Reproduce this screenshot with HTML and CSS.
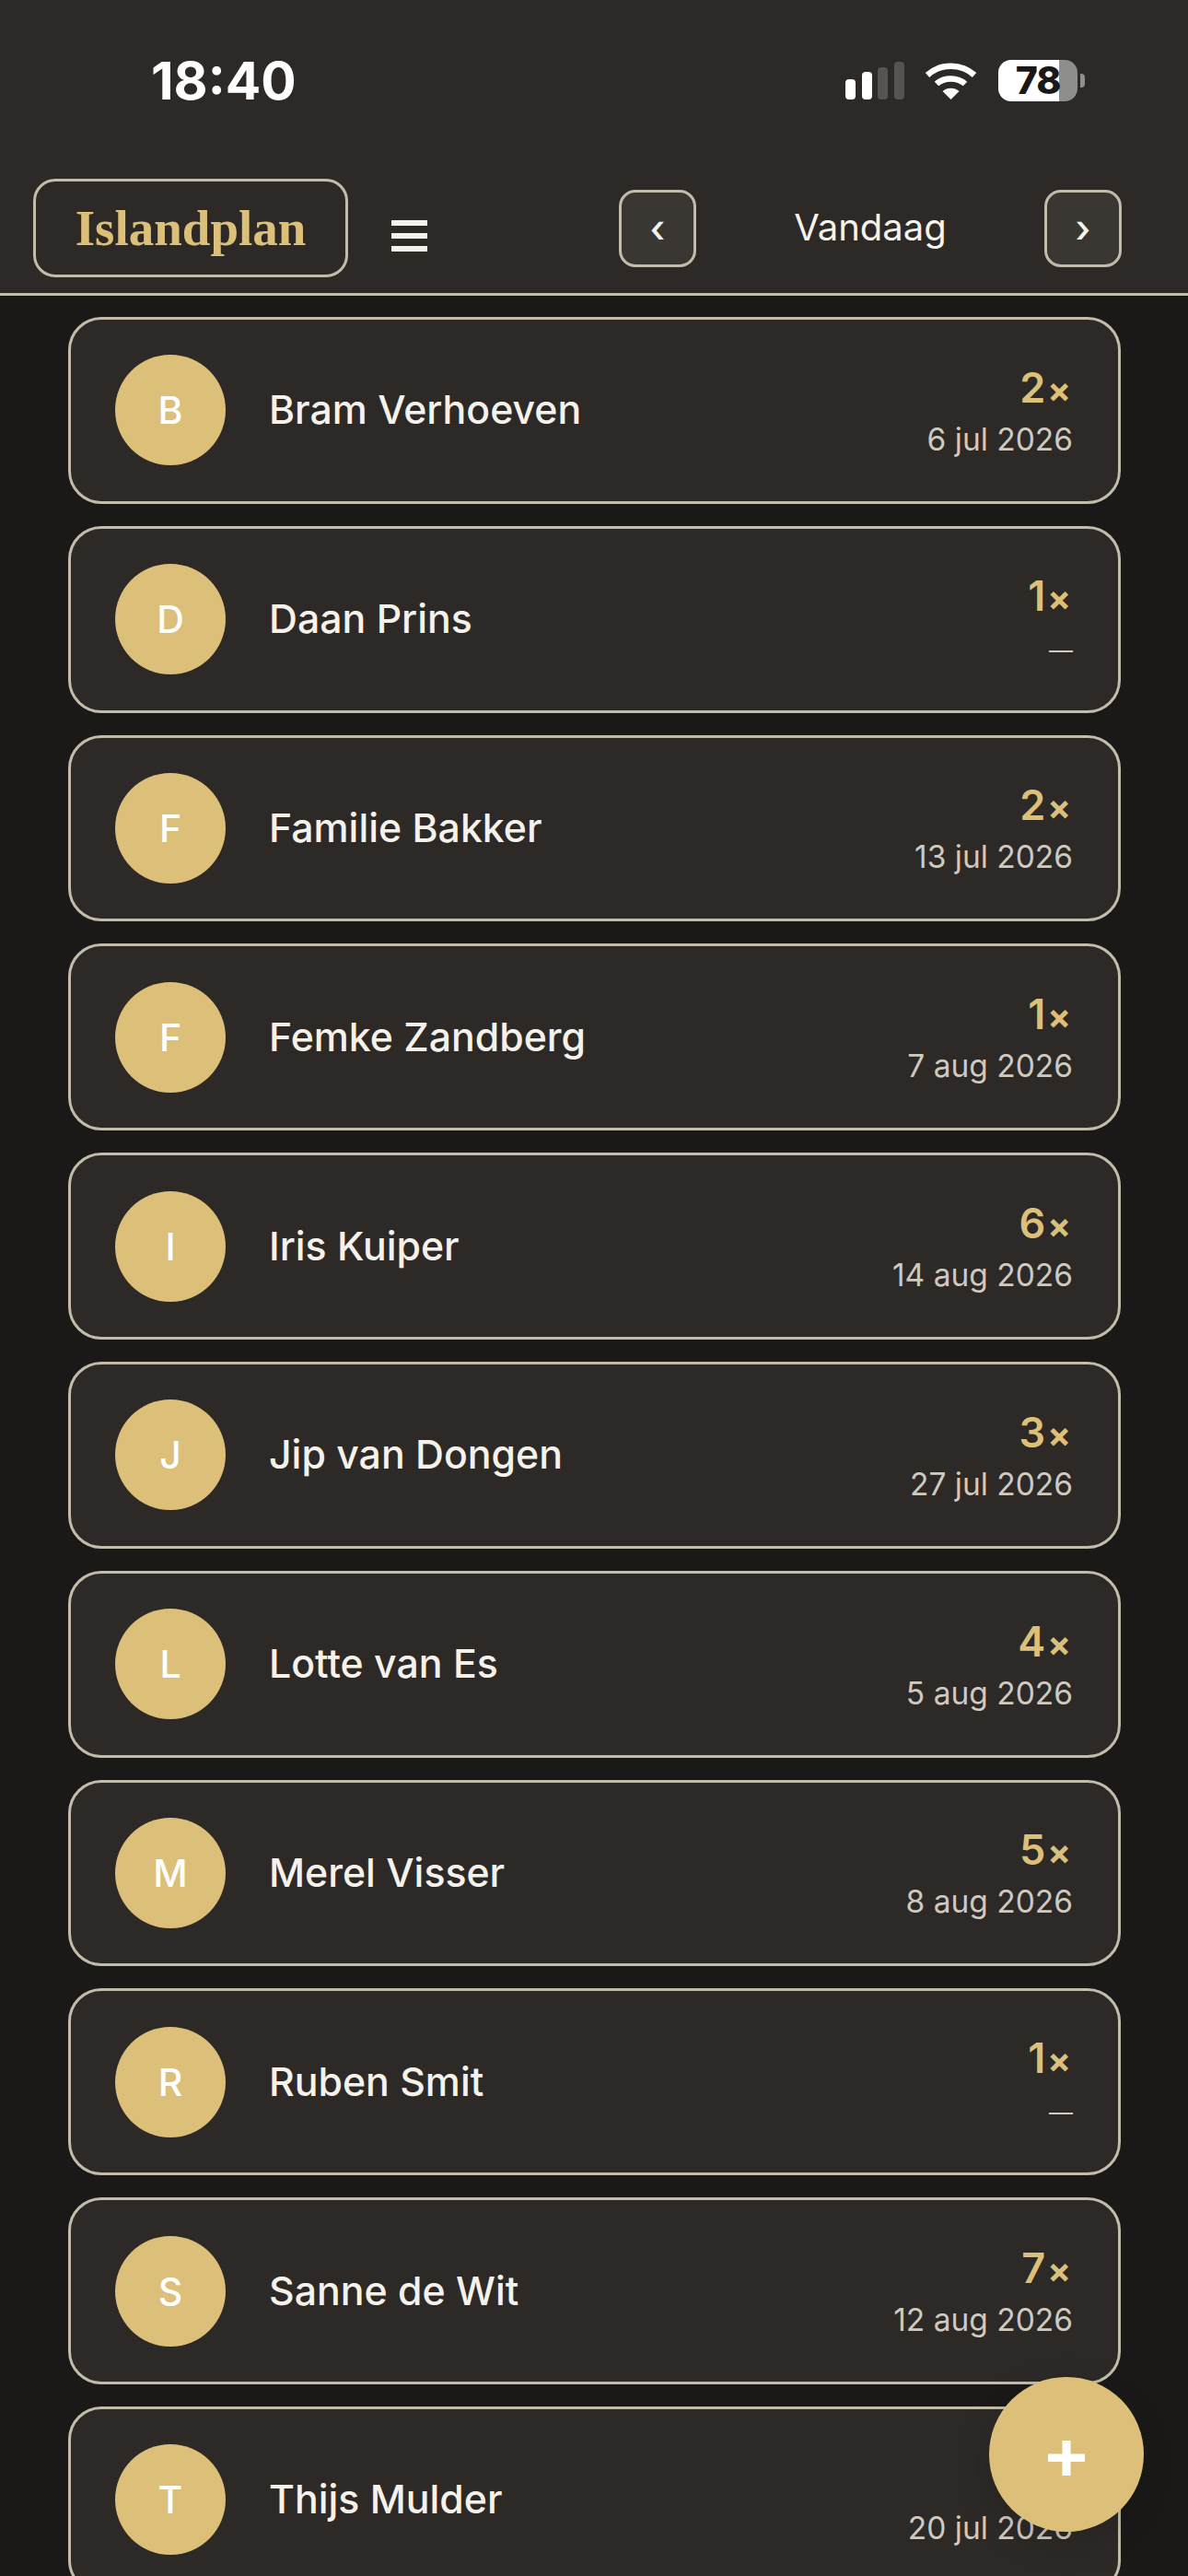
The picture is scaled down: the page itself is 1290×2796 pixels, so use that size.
FILE: index.html
```html
<!DOCTYPE html>
<html lang="nl">
<head>
    <meta charset="UTF-8">
    <meta name="viewport" content="width=device-width, initial-scale=1.0">
    <title>Islandplan</title>
    <link rel="stylesheet" href="styles.css">
</head>
<body>

    <div id="app">
        <header class="top">
            <div class="status">
                <span class="time">18:40</span>
                <div class="status-icons">
                    <svg class="signal" width="64" height="41" viewBox="0 0 64 41">
                        <rect x="0" y="19" width="11" height="22" rx="4" fill="#fff"/>
                        <rect x="18" y="11" width="11" height="30" rx="4" fill="#fff"/>
                        <rect x="35" y="6" width="11" height="35" rx="4" fill="#555452"/>
                        <rect x="53" y="0" width="11" height="41" rx="4" fill="#555452"/>
                    </svg>
                    <svg class="wifi" width="57" height="42" viewBox="0 0 57 42">
                        <path d="M3 15.500 C17 2.500 40 2.500 54 15.500" fill="none" stroke="#fff" stroke-width="6.500"/>
                        <path d="M13 25 C21 17.500 36 17.500 44 25" fill="none" stroke="#fff" stroke-width="6.500"/>
                        <path d="M19.500 33 C24 28.500 33 28.500 37.500 33 L28.500 42 Z" fill="#fff"/>
                    </svg>
                    <div class="battery"><span>78</span></div>
                </div>
            </div>
            <nav class="nav">
                <div class="brand">Islandplan</div>
                <div class="burger"><i></i><i></i><i></i></div>
                <div class="day-nav">
                    <button class="day-btn">‹</button>
                    <span class="day-label">Vandaag</span>
                    <button class="day-btn">›</button>
                </div>
            </nav>
        </header>

        <main class="list">
            <div class="card">
                <div class="avatar">B</div>
                <div class="name">Bram Verhoeven</div>
                <div class="meta"><div class="count">2<span class="times">×</span></div><div class="date">6 jul 2026</div></div>
            </div>
            <div class="card">
                <div class="avatar">D</div>
                <div class="name">Daan Prins</div>
                <div class="meta"><div class="count">1<span class="times">×</span></div><div class="date"><span class="dash">—</span></div></div>
            </div>
            <div class="card">
                <div class="avatar">F</div>
                <div class="name">Familie Bakker</div>
                <div class="meta"><div class="count">2<span class="times">×</span></div><div class="date">13 jul 2026</div></div>
            </div>
            <div class="card">
                <div class="avatar">F</div>
                <div class="name">Femke Zandberg</div>
                <div class="meta"><div class="count">1<span class="times">×</span></div><div class="date">7 aug 2026</div></div>
            </div>
            <div class="card">
                <div class="avatar">I</div>
                <div class="name">Iris Kuiper</div>
                <div class="meta"><div class="count">6<span class="times">×</span></div><div class="date">14 aug 2026</div></div>
            </div>
            <div class="card">
                <div class="avatar">J</div>
                <div class="name">Jip van Dongen</div>
                <div class="meta"><div class="count">3<span class="times">×</span></div><div class="date">27 jul 2026</div></div>
            </div>
            <div class="card">
                <div class="avatar">L</div>
                <div class="name">Lotte van Es</div>
                <div class="meta"><div class="count">4<span class="times">×</span></div><div class="date">5 aug 2026</div></div>
            </div>
            <div class="card">
                <div class="avatar">M</div>
                <div class="name">Merel Visser</div>
                <div class="meta"><div class="count">5<span class="times">×</span></div><div class="date">8 aug 2026</div></div>
            </div>
            <div class="card">
                <div class="avatar">R</div>
                <div class="name">Ruben Smit</div>
                <div class="meta"><div class="count">1<span class="times">×</span></div><div class="date"><span class="dash">—</span></div></div>
            </div>
            <div class="card">
                <div class="avatar">S</div>
                <div class="name">Sanne de Wit</div>
                <div class="meta"><div class="count">7<span class="times">×</span></div><div class="date">12 aug 2026</div></div>
            </div>
            <div class="card">
                <div class="avatar">T</div>
                <div class="name">Thijs Mulder</div>
                <div class="meta"><div class="count">&nbsp;</div><div class="date">20 jul 2026</div></div>
            </div>
        </main>

        <button class="fab"><svg width="40" height="38" viewBox="0 0 40 38"><path d="M15.500 0h9v14.500H40v8.500H24.500V38h-9V23H0v-8.500h15.500z" fill="#fff"/></svg></button>
    </div>

</body>
</html>
```

FILE: styles.css
```css
* {
    box-sizing: border-box;
}

body {
    margin: 0;
    background: #1a1917;
    font-family: Inter, "Noto Sans", sans-serif;
    color: #f5f2eb;
}

#app {
    position: relative;
    width: 1290px;
    height: 2796px;
    overflow: hidden;
}

.top {
    height: 321px;
    background: #2d2926;
    border-bottom: 3px solid #c4bcab;
}

.status {
    display: flex;
    justify-content: space-between;
    align-items: center;
    height: 174px;
    padding: 0 120px 0 164px;
}

.time {
    font-size: 57px;
    font-weight: 700;
    color: #fff;
}

.status-icons {
    display: flex;
    align-items: center;
    gap: 23px;
}

.signal {
    margin-right: -1px;
}

.battery {
    position: relative;
    width: 86px;
    height: 45px;
    border-radius: 14px;
    background: linear-gradient(90deg, #fff 77%, #8e8e8d 77%);
    display: flex;
    align-items: center;
    justify-content: center;
    font-size: 41px;
    font-weight: 800;
    letter-spacing: -1px;
    color: #1a1917;
}

.battery::after {
    content: "";
    position: absolute;
    left: 89px;
    top: 15px;
    width: 5px;
    height: 15px;
    border-radius: 0 4px 4px 0;
    background: #8e8e8d;
}

.nav {
    display: flex;
    align-items: center;
    padding: 20px 72px 0 36px;
}

.brand {
    width: 342px;
    height: 107px;
    border: 3px solid #c4bcab;
    border-radius: 24px;
    display: flex;
    align-items: center;
    justify-content: center;
    font-family: "Liberation Serif", serif;
    font-weight: 700;
    font-size: 55px;
    color: #dcc07a;
}

.burger {
    display: flex;
    flex-direction: column;
    gap: 8px;
    margin: 16px 0 0 47px;
}

.burger i {
    display: block;
    width: 39px;
    height: 6px;
    background: #f5f2eb;
}

.day-nav {
    flex: 1;
    display: flex;
    align-items: center;
    justify-content: space-between;
    margin-left: 208px;
}

.day-btn {
    width: 84px;
    height: 84px;
    padding: 0;
    border: 3px solid #c4bcab;
    border-radius: 18px;
    background: #3a3733;
    color: #f5f2eb;
    font-family: Inter, sans-serif;
    font-size: 42px;
    font-weight: 500;
}

.day-label {
    font-size: 40px;
    margin-bottom: 3px;
}

.list {
    display: flex;
    flex-direction: column;
    gap: 24px;
    padding: 23px 73px 0 74px;
}

.card {
    flex: none;
    display: flex;
    align-items: center;
    height: 202.8px;
    padding: 0 49px 0 48px;
    background: #2d2926;
    border: 3px solid #c4bcab;
    border-radius: 36px;
}

.avatar {
    flex: none;
    width: 120px;
    height: 120px;
    border-radius: 50%;
    background: #dcc07a;
    color: #fff;
    display: flex;
    align-items: center;
    justify-content: center;
    font-size: 41px;
    font-weight: 500;
}

.name {
    flex: 1;
    margin: 0 0 1px 47px;
    font-size: 42.8px;
    font-weight: 500;
}

.meta {
    text-align: right;
}

.count {
    padding-right: 2px;
    font-size: 45px;
    line-height: 56px;
    font-weight: 600;
    color: #dcc07a;
}

.times {
    margin-left: 2px;
    font-size: 38px;
    font-weight: 700;
}

.date {
    margin-top: 6px;
    font-size: 33.5px;
    line-height: 41px;
    color: #cfcabf;
}

.dash {
    font-size: 26px;
}

.fab {
    position: absolute;
    left: 1074px;
    top: 2580px;
    width: 168px;
    height: 168px;
    padding: 10px 0 0;
    border: 0;
    border-radius: 50%;
    background: #dcc07a;
    box-shadow: 0 12px 36px rgba(0, 0, 0, 0.15);
}
```
